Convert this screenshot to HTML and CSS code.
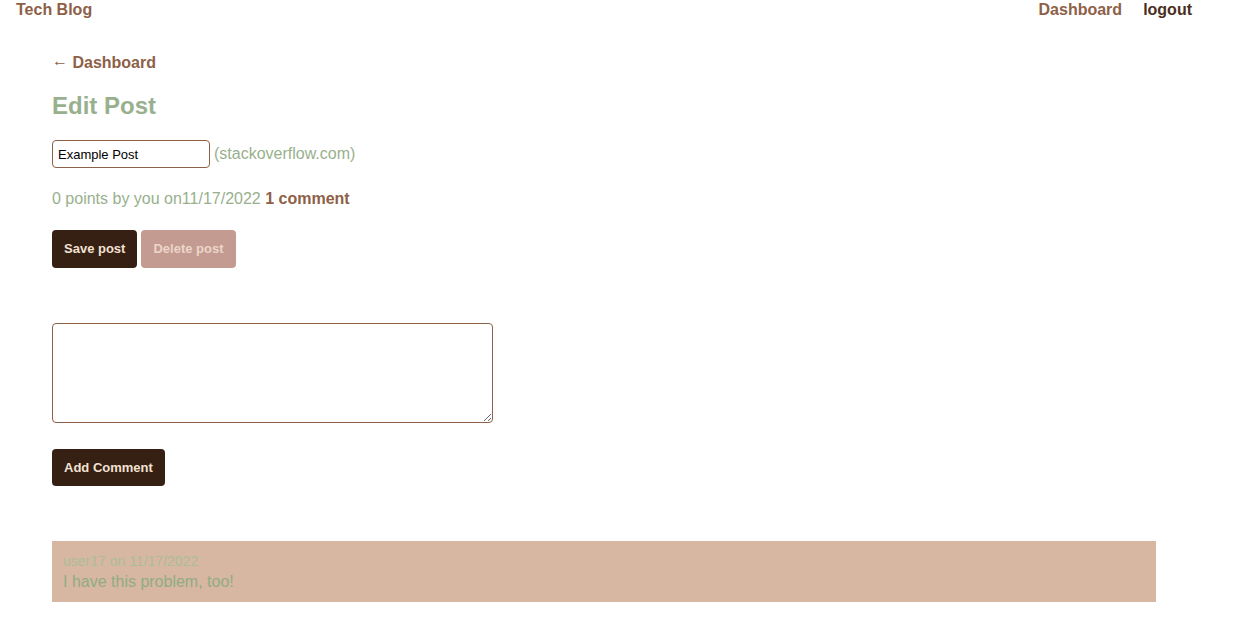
FILE: index.html
```html
<!DOCTYPE html>
<html>
<head>
<meta charset="utf-8">
<link rel="stylesheet" href="styles.css">
</head>
<body>
<header class="topbar">
  <a class="brand" href="#">Tech Blog</a>
  <nav class="nav">
    <a class="nav-link" href="#">Dashboard</a>
    <a class="nav-logout" href="#">logout</a>
  </nav>
</header>
<main class="main">
  <a class="back" href="#"><span class="arrow">&larr;</span> Dashboard</a>
  <h2 class="title">Edit Post</h2>
  <div class="post-row">
    <input class="post-input" type="text" value="Example Post">
    <span class="post-url">(stackoverflow.com)</span>
  </div>
  <p class="meta">0 points by you on11/17/2022 <a class="comments" href="#">1 comment</a></p>
  <div class="actions">
    <button class="btn btn-dark">Save post</button>
    <button class="btn btn-light">Delete post</button>
  </div>
  <form class="comment-form">
    <textarea class="comment-text"></textarea>
    <button class="btn btn-dark btn-add" type="button">Add Comment</button>
  </form>
  <div class="comment">
    <div class="comment-meta">user17 on 11/17/2022</div>
    <div class="comment-body">I have this problem, too!</div>
  </div>
</main>
</body>
</html>
```

FILE: styles.css
```css
* { box-sizing: border-box; }
body {
  margin: 0;
  font-family: "Liberation Sans", Arial, sans-serif;
  background: #fff;
}
a { text-decoration: none; }
.topbar {
  display: flex;
  justify-content: space-between;
  align-items: center;
  padding: 0 44px 0 16px;
  height: 20px;
  font-weight: bold;
  font-size: 16px;
}
.brand { color: #8d6047; }
.nav { display: flex; gap: 21px; }
.nav-link { color: #8d6047; }
.nav-logout { color: #4b2e22; }
.main {
  padding: 33px 0 0 52px;
  width: 1156px;
}
.back {
  display: block;
  font-weight: bold;
  font-size: 16px;
  color: #8d6047;
  line-height: 20px;
}
.arrow {
  display: inline-block;
  vertical-align: 2px;
  line-height: 16px;
}
.title {
  margin: 19px 0 0;
  font-size: 24px;
  line-height: 28px;
  color: #98b08d;
}
.post-row {
  display: flex;
  align-items: center;
  margin-top: 20px;
  gap: 4px;
}
.post-input {
  width: 158px;
  height: 28px;
  border: 1px solid #8d6047;
  border-radius: 4px;
  padding: 0 5px;
  font-family: "Liberation Sans", Arial, sans-serif;
  font-size: 13px;
  color: #000;
}
.post-url { color: #98b08d; font-size: 16px; }
.meta {
  margin: 21px 0 0;
  font-size: 16px;
  line-height: 20px;
  color: #98b08d;
}
.comments { color: #8d6047; font-weight: bold; }
.actions {
  display: flex;
  gap: 4px;
  margin-top: 21px;
}
.btn {
  border: none;
  border-radius: 4px;
  height: 38px;
  padding: 0 12px 1px;
  font-family: "Liberation Sans", Arial, sans-serif;
  font-size: 13px;
  font-weight: bold;
}
.btn-dark { background: #362013; color: #f2e1d2; }
.btn-light { background: #c49b90; color: #ecd5c9; }
.comment-form {
  display: flex;
  flex-direction: column;
  align-items: flex-start;
  margin-top: 55px;
}
.comment-text {
  width: 441px;
  height: 100px;
  border: 1px solid #8d6047;
  border-radius: 4px;
  display: block;
}
.btn-add { margin-top: 26px; height: 37px; }
.comment {
  margin-top: 55px;
  width: 1104px;
  background: #d8b7a2;
  padding: 12px 11px 10px;
}
.comment-meta { font-size: 14px; color: #a9bd97; line-height: 16px; }
.comment-body { font-size: 16px; color: #8fac84; line-height: 20px; margin-top: 3px; }
```
